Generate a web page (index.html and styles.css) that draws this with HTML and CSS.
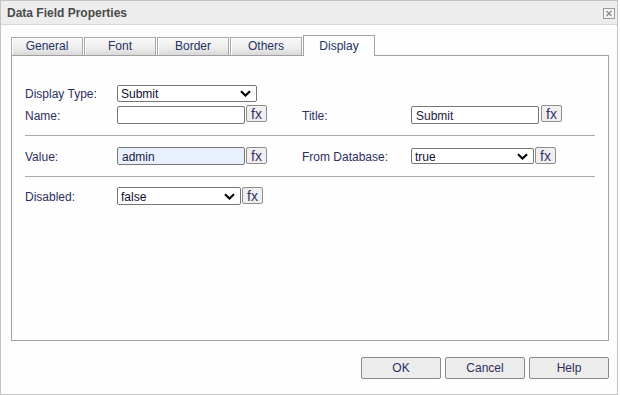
FILE: index.html
```html
<!DOCTYPE html>
<html>
<head>
<meta charset="utf-8">
<link rel="stylesheet" href="styles.css">
</head>
<body>
<div class="dialog">
  <div class="titlebar">
    <span class="title">Data Field Properties</span>
    <span class="close"><svg width="12" height="11" viewBox="0 0 12 11"><rect x="0.5" y="0.5" width="11" height="10" fill="#f4f4f4" stroke="#9a9a9a"/><path d="M3.5 3l5 5M8.5 3l-5 5" stroke="#8a8a8a" stroke-width="1.2"/></svg></span>
  </div>
  <div class="tabs">
    <div class="tab">General</div>
    <div class="tab">Font</div>
    <div class="tab">Border</div>
    <div class="tab">Others</div>
    <div class="tab active">Display</div>
  </div>
  <div class="panel">
    <div class="row r1">
      <label class="lab">Display Type:</label>
      <div class="ctl"><select class="sel w140"><option>Submit</option></select></div>
    </div>
    <div class="row r2">
      <label class="lab">Name:</label>
      <div class="ctl grp"><input class="inp" type="text" value=""><button class="fx">fx</button></div>
      <label class="lab lab2">Title:</label>
      <div class="ctl grp"><input class="inp" type="text" value="Submit"><button class="fx">fx</button></div>
    </div>
    <div class="sep s1"></div>
    <div class="row r3">
      <label class="lab">Value:</label>
      <div class="ctl grp"><input class="inp filled" type="text" value="admin"><button class="fx">fx</button></div>
      <label class="lab lab2">From Database:</label>
      <div class="ctl grp"><select class="sel w123 h16"><option>true</option></select><button class="fx">fx</button></div>
    </div>
    <div class="sep s2"></div>
    <div class="row r4">
      <label class="lab">Disabled:</label>
      <div class="ctl grp"><select class="sel w124 h18"><option>false</option></select><button class="fx">fx</button></div>
    </div>
  </div>
  <div class="buttons">
    <button class="btn">OK</button>
    <button class="btn">Cancel</button>
    <button class="btn">Help</button>
  </div>
</div>
</body>
</html>
```
FILE: styles.css
```css
* { box-sizing: border-box; }
html, body { margin: 0; padding: 0; background: #ffffff; }
body { font-family: "Liberation Sans", Arial, sans-serif; font-size: 12px; color: #2e2e5e; }

.dialog {
  width: 618px;
  height: 395px;
  border: 1px solid #c4c4c4;
  background: #fcfdfc;
  display: flex;
  flex-direction: column;
}

.titlebar {
  height: 24px;
  background: #ededed;
  border-bottom: 1px solid #d6d6d6;
  display: flex;
  align-items: center;
  justify-content: space-between;
  padding: 0 2px 0 6px;
}
.title { font-weight: bold; font-size: 12px; color: #4a4a4a; margin-top: 1px; }
.close { display: flex; margin-top: 2px; }

.tabs {
  display: flex;
  gap: 1px;
  margin: 10px 0 0 10px;
  height: 20px;
  align-items: flex-end;
}
.tab {
  width: 72px;
  height: 18px;
  border: 1px solid #a8a8a8;
  border-bottom: none;
  box-shadow: inset 1px 1px 0 #ffffff;
  background: linear-gradient(#f9f9f9, #ececec 60%, #d8d8d8);
  text-align: center;
  line-height: 17px;
  color: #243262;
}
.tab.active {
  height: 21px;
  margin-bottom: -1px;
  background: #fdfefd;
  box-shadow: none;
  border-color: #a3a3a3;
  position: relative;
  z-index: 1;
  line-height: 20px;
  color: #243262;
}

.panel {
  margin: 0 8px 0 10px;
  height: 286px;
  border: 1px solid #a0a0a0;
  background: #fdfefd;
  padding: 29px 13px 0 13px;
  display: flex;
  flex-direction: column;
}

.row { display: flex; align-items: flex-start; }
.r1 { height: 17px; }
.r2 { height: 19px; margin-top: 3px; }
.r3 { height: 18px; margin-top: 11px; }
.r4 { height: 18px; margin-top: 10px; }

.lab { width: 92px; flex: none; align-self: center; color: #2e2e5e; white-space: nowrap; }
.r2 .lab { margin-top: 2px; }
.r3 .lab { margin-top: 1px; }
.r4 .lab { margin-top: 2px; }
.lab2 { width: 109px; }
.ctl { width: 185px; flex: none; display: flex; align-items: flex-start; }

.sep { height: 1px; background: #a8a8a8; flex: none; }
.s1 { margin-top: 11px; }
.s2 { margin-top: 11px; }

.inp {
  width: 128px;
  height: 18px;
  border: 1px solid #767676;
  border-radius: 2px;
  background: #ffffff;
  font-family: "Liberation Sans", Arial, sans-serif;
  font-size: 12px;
  color: #1c1c40;
  padding: 1px 0 0 4px;
  margin: 1px 0 0 0;
  outline: none;
}
.r3 .inp { margin-top: 0; }
.inp.filled { background: #e8f0fe; }

.sel {
  -webkit-appearance: none;
  appearance: none;
  height: 17px;
  border: 1px solid #767676;
  border-radius: 2px;
  font-family: "Liberation Sans", Arial, sans-serif;
  font-size: 12px;
  color: #101030;
  padding: 1px 0 0 3px;
  line-height: 14px;
  background: #ffffff url("data:image/svg+xml;utf8,<svg xmlns='http://www.w3.org/2000/svg' width='11' height='7' viewBox='0 0 11 7'><path d='M1 1.2l4.5 4.3L10 1.2' fill='none' stroke='black' stroke-width='2.2'/></svg>") no-repeat right 5px center;
  outline: none;
}
.w140 { width: 140px; }
.w123 { width: 123px; }
.w124 { width: 124px; }
.h16 { height: 16px; margin-top: 1px; }
.h18 { height: 18px; }

.fx {
  width: 21px;
  height: 17px;
  margin-left: 1px;
  padding: 0;
  border: 1px solid #8e8e8e;
  border-radius: 2px;
  background: #efefef;
  font-family: "Liberation Sans", Arial, sans-serif;
  font-size: 14px;
  line-height: 14px;
  color: #34346e;
}
.r2 .ctl:last-child .fx { margin-left: 2px; }

.buttons {
  display: flex;
  justify-content: flex-end;
  gap: 4px;
  margin: 16px 8px 0 0;
}
.btn {
  width: 80px;
  height: 22px;
  border: 1px solid #8a8a8a;
  border-radius: 2px;
  background: #ececec;
  font-family: "Liberation Sans", Arial, sans-serif;
  font-size: 12px;
  color: #2e2e5e;
  padding: 0;
}
```
